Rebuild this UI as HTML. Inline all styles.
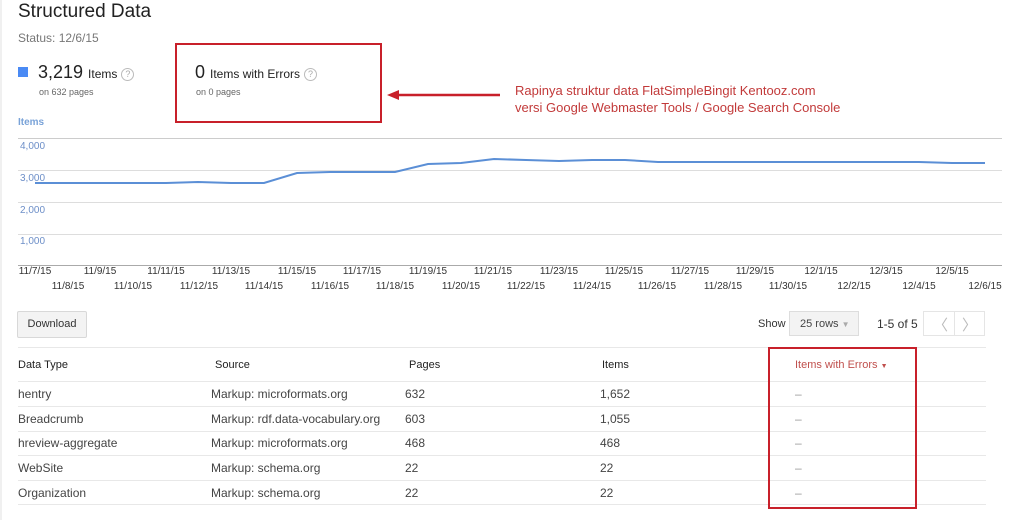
<!DOCTYPE html>
<html><head><meta charset="utf-8"><style>
body{margin:0;width:1024px;height:520px;background:#fff;font-family:"Liberation Sans",Arial,sans-serif;position:relative;overflow:hidden;color:#222}
.a{position:absolute;white-space:nowrap}
.d{position:absolute;width:50px;text-align:center;font-size:10px;color:#333}
.th{font-size:11px;color:#222;top:359px}
.td{font-size:12px;color:#444}
.hl{position:absolute;left:18px;width:968px;height:1px;background:#e8e8e8}
.q{display:inline-block;width:11px;height:11px;border:1px solid #bbb;border-radius:50%;font-size:9px;color:#aaa;text-align:center;line-height:11px;vertical-align:1px;margin-left:4px}
</style></head><body>
<div class="a" style="left:0;top:0;width:2px;height:520px;background:#f0f0f0"></div>
<div class="a" style="left:18px;top:1px;font-size:19px;color:#222">Structured Data</div>
<div class="a" style="left:18px;top:31px;font-size:12px;color:#777">Status: 12/6/15</div>
<div class="a" style="left:18px;top:67px;width:10px;height:10px;background:#4a8af4"></div>
<div class="a" style="left:38px;top:62px;font-size:18px;color:#222">3,219 <span style="font-size:12px">Items</span><span class="q">?</span></div>
<div class="a" style="left:39px;top:87px;font-size:9px;color:#666">on 632 pages</div>
<div class="a" style="left:195px;top:62px;font-size:18px;color:#222">0 <span style="font-size:12px">Items with Errors</span><span class="q">?</span></div>
<div class="a" style="left:196px;top:87px;font-size:9px;color:#666">on 0 pages</div>
<div class="a" style="left:175px;top:43px;width:203px;height:76px;border:2px solid #c8202a"></div>
<svg class="a" style="left:385px;top:85px" width="120" height="20"><line x1="12" y1="10" x2="115" y2="10" stroke="#c8202a" stroke-width="2.5"/><polygon points="2,10 14,5 14,15" fill="#c8202a"/></svg>
<div class="a" style="left:515px;top:82px;font-size:13px;line-height:17px;color:#c23a3a">Rapinya struktur data FlatSimpleBingit Kentooz.com<br>versi Google Webmaster Tools / Google Search Console</div>
<div class="a" style="left:18px;top:117px;font-size:10px;font-weight:bold;color:#7aa3d8">Items</div>
<div class="a" style="left:18px;top:138px;width:984px;height:1px;background:#ccc"></div>
<div class="a" style="left:18px;top:170px;width:984px;height:1px;background:#ddd"></div>
<div class="a" style="left:18px;top:202px;width:984px;height:1px;background:#ddd"></div>
<div class="a" style="left:18px;top:234px;width:984px;height:1px;background:#ddd"></div>
<div class="a" style="left:18px;top:265px;width:984px;height:1px;background:#aaa"></div>
<div class="a" style="left:20px;top:141px;font-size:10px;color:#6d8fc8">4,000</div>
<div class="a" style="left:20px;top:173px;font-size:10px;color:#6d8fc8">3,000</div>
<div class="a" style="left:20px;top:205px;font-size:10px;color:#6d8fc8">2,000</div>
<div class="a" style="left:20px;top:236px;font-size:10px;color:#6d8fc8">1,000</div>
<svg class="a" style="left:0;top:0" width="1024" height="300"><polyline fill="none" stroke="#5b8fd6" stroke-width="2" points="35,183 100,183 166,183 198,182 231,183 264,183 297,173 330,172 395,172 428,164 461,163 494,159 526,160 559,161 592,160 625,160 658,162 690,162 723,162 755,162 788,162 821,162 854,162 886,162 919,162 952,163 985,163"/></svg>
<div class="d" style="left:10px;top:266px">11/7/15</div><div class="d" style="left:75px;top:266px">11/9/15</div><div class="d" style="left:141px;top:266px">11/11/15</div><div class="d" style="left:206px;top:266px">11/13/15</div><div class="d" style="left:272px;top:266px">11/15/15</div><div class="d" style="left:337px;top:266px">11/17/15</div><div class="d" style="left:403px;top:266px">11/19/15</div><div class="d" style="left:468px;top:266px">11/21/15</div><div class="d" style="left:534px;top:266px">11/23/15</div><div class="d" style="left:599px;top:266px">11/25/15</div><div class="d" style="left:665px;top:266px">11/27/15</div><div class="d" style="left:730px;top:266px">11/29/15</div><div class="d" style="left:796px;top:266px">12/1/15</div><div class="d" style="left:861px;top:266px">12/3/15</div><div class="d" style="left:927px;top:266px">12/5/15</div>
<div class="d" style="left:43px;top:281px">11/8/15</div><div class="d" style="left:108px;top:281px">11/10/15</div><div class="d" style="left:174px;top:281px">11/12/15</div><div class="d" style="left:239px;top:281px">11/14/15</div><div class="d" style="left:305px;top:281px">11/16/15</div><div class="d" style="left:370px;top:281px">11/18/15</div><div class="d" style="left:436px;top:281px">11/20/15</div><div class="d" style="left:501px;top:281px">11/22/15</div><div class="d" style="left:567px;top:281px">11/24/15</div><div class="d" style="left:632px;top:281px">11/26/15</div><div class="d" style="left:698px;top:281px">11/28/15</div><div class="d" style="left:763px;top:281px">11/30/15</div><div class="d" style="left:829px;top:281px">12/2/15</div><div class="d" style="left:894px;top:281px">12/4/15</div><div class="d" style="left:960px;top:281px">12/6/15</div>
<div class="a" style="left:17px;top:311px;width:68px;height:25px;border:1px solid #d8d8d8;border-radius:2px;background:#f3f3f3;font-size:11px;line-height:25px;text-align:center;color:#333">Download</div>
<div class="a" style="left:758px;top:318px;font-size:11px;color:#333">Show</div>
<div class="a" style="left:789px;top:311px;width:70px;height:25px;border:1px solid #ddd;background:#f3f3f3;font-size:11px;line-height:25px;color:#444;padding-left:10px;box-sizing:border-box">25 rows <span style="color:#aaa;font-size:8px">▼</span></div>
<div class="a" style="left:877px;top:317px;font-size:12px;color:#333">1-5 of 5</div>
<div class="a" style="left:923px;top:311px;width:62px;height:25px;border:1px solid #e5e5e5;box-sizing:border-box"></div>
<div class="a" style="left:954px;top:311px;width:1px;height:25px;background:#e5e5e5"></div>
<div class="a" style="left:933px;top:314px;font-size:15px;color:#bbb">〈</div>
<div class="a" style="left:962px;top:314px;font-size:15px;color:#bbb">〉</div>
<div class="hl" style="top:347px"></div>
<div class="a th" style="left:18px">Data Type</div><div class="a th" style="left:215px">Source</div><div class="a th" style="left:409px">Pages</div><div class="a th" style="left:602px">Items</div><div class="a th" style="left:795px;color:#c0504d">Items with Errors <span style="font-size:7px">▼</span></div>
<div class="hl" style="top:381px"></div>
<div class="a td" style="left:18px;top:387px">hentry</div><div class="a td" style="left:211px;top:387px">Markup: microformats.org</div><div class="a td" style="left:405px;top:387px">632</div><div class="a td" style="left:600px;top:387px">1,652</div><div class="a td" style="left:795px;top:387px;color:#999">–</div>
<div class="hl" style="top:406px"></div>
<div class="a td" style="left:18px;top:412px">Breadcrumb</div><div class="a td" style="left:211px;top:412px">Markup: rdf.data-vocabulary.org</div><div class="a td" style="left:405px;top:412px">603</div><div class="a td" style="left:600px;top:412px">1,055</div><div class="a td" style="left:795px;top:412px;color:#999">–</div>
<div class="hl" style="top:431px"></div>
<div class="a td" style="left:18px;top:436px">hreview-aggregate</div><div class="a td" style="left:211px;top:436px">Markup: microformats.org</div><div class="a td" style="left:405px;top:436px">468</div><div class="a td" style="left:600px;top:436px">468</div><div class="a td" style="left:795px;top:436px;color:#999">–</div>
<div class="hl" style="top:455px"></div>
<div class="a td" style="left:18px;top:461px">WebSite</div><div class="a td" style="left:211px;top:461px">Markup: schema.org</div><div class="a td" style="left:405px;top:461px">22</div><div class="a td" style="left:600px;top:461px">22</div><div class="a td" style="left:795px;top:461px;color:#999">–</div>
<div class="hl" style="top:480px"></div>
<div class="a td" style="left:18px;top:486px">Organization</div><div class="a td" style="left:211px;top:486px">Markup: schema.org</div><div class="a td" style="left:405px;top:486px">22</div><div class="a td" style="left:600px;top:486px">22</div><div class="a td" style="left:795px;top:486px;color:#999">–</div>
<div class="hl" style="top:504px"></div>
<div class="a" style="left:768px;top:347px;width:145px;height:158px;border:2px solid #c8202a"></div>
</body></html>
